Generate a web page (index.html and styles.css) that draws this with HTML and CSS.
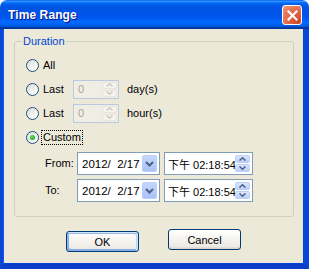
FILE: index.html
```html
<!DOCTYPE html>
<html lang="en">
<head>
    <meta charset="UTF-8">
    <title>Time Range</title>
    <link rel="stylesheet" href="styles.css">
</head>
<body>
<div class="janela">
    <div class="barra-titulo">
        <span class="titulo">Time Range</span>
        <button type="button" class="fechar">
            <svg width="11" height="11" viewBox="0 0 11 11"><path d="M1.5 1.5 L9.5 9.5 M9.5 1.5 L1.5 9.5" stroke="#fff" stroke-width="2.2" stroke-linecap="square"/></svg>
        </button>
    </div>
    <div class="cliente">
        <fieldset class="grupo">
            <legend>Duration</legend>

            <div class="linha">
                <span class="radio"></span>
                <span class="texto">All</span>
            </div>

            <div class="linha">
                <span class="radio"></span>
                <span class="texto rotulo">Last</span>
                <div class="caixa desativada">
                    <span class="valor">0</span>
                    <span class="spin">
                        <span class="seta"><svg width="7" height="4" viewBox="0 0 7 4"><path d="M0.5 3.5 L3.5 0.8 L6.5 3.5" fill="none" stroke="#C9C7BA" stroke-width="1.3"/></svg></span>
                        <span class="seta"><svg width="7" height="4" viewBox="0 0 7 4"><path d="M0.5 0.5 L3.5 3.2 L6.5 0.5" fill="none" stroke="#C9C7BA" stroke-width="1.3"/></svg></span>
                    </span>
                </div>
                <span class="texto unidade">day(s)</span>
            </div>

            <div class="linha">
                <span class="radio"></span>
                <span class="texto rotulo">Last</span>
                <div class="caixa desativada">
                    <span class="valor">0</span>
                    <span class="spin">
                        <span class="seta"><svg width="7" height="4" viewBox="0 0 7 4"><path d="M0.5 3.5 L3.5 0.8 L6.5 3.5" fill="none" stroke="#C9C7BA" stroke-width="1.3"/></svg></span>
                        <span class="seta"><svg width="7" height="4" viewBox="0 0 7 4"><path d="M0.5 0.5 L3.5 3.2 L6.5 0.5" fill="none" stroke="#C9C7BA" stroke-width="1.3"/></svg></span>
                    </span>
                </div>
                <span class="texto unidade">hour(s)</span>
            </div>

            <div class="linha">
                <span class="radio marcado"></span>
                <span class="texto foco">Custom</span>
            </div>

            <div class="linha-data primeira">
                <span class="texto rotulo-data">From:</span>
                <div class="combo">
                    <span class="valor">2012/&nbsp; 2/17</span>
                    <span class="abrir"><svg width="9" height="6" viewBox="0 0 9 6"><path d="M1 1 L4.5 4.5 L8 1" fill="none" stroke="#4D6185" stroke-width="2"/></svg></span>
                </div>
                <div class="hora">
                    <span class="valor">下午 02:18:54</span>
                    <span class="spin azul">
                        <span class="seta"><svg width="7" height="4" viewBox="0 0 7 4"><path d="M0.5 3.5 L3.5 0.8 L6.5 3.5" fill="none" stroke="#4D6185" stroke-width="1.5"/></svg></span>
                        <span class="seta"><svg width="7" height="4" viewBox="0 0 7 4"><path d="M0.5 0.5 L3.5 3.2 L6.5 0.5" fill="none" stroke="#4D6185" stroke-width="1.5"/></svg></span>
                    </span>
                </div>
            </div>

            <div class="linha-data">
                <span class="texto rotulo-data">To:</span>
                <div class="combo">
                    <span class="valor">2012/&nbsp; 2/17</span>
                    <span class="abrir"><svg width="9" height="6" viewBox="0 0 9 6"><path d="M1 1 L4.5 4.5 L8 1" fill="none" stroke="#4D6185" stroke-width="2"/></svg></span>
                </div>
                <div class="hora">
                    <span class="valor">下午 02:18:54</span>
                    <span class="spin azul">
                        <span class="seta"><svg width="7" height="4" viewBox="0 0 7 4"><path d="M0.5 3.5 L3.5 0.8 L6.5 3.5" fill="none" stroke="#4D6185" stroke-width="1.5"/></svg></span>
                        <span class="seta"><svg width="7" height="4" viewBox="0 0 7 4"><path d="M0.5 0.5 L3.5 3.2 L6.5 0.5" fill="none" stroke="#4D6185" stroke-width="1.5"/></svg></span>
                    </span>
                </div>
            </div>
        </fieldset>

        <div class="botoes">
            <button type="button" class="botao padrao">OK</button>
            <button type="button" class="botao cancelar">Cancel</button>
        </div>
    </div>
</div>
</body>
</html>
```

FILE: styles.css
```css
:root {
    --fundo: #ECE9D8;
    --borda-caixa: #7F9DB9;
    --azul-texto: #0046D5;
}

* {
    box-sizing: border-box;
    margin: 0;
    padding: 0;
}

body {
    width: 309px;
    height: 269px;
    overflow: hidden;
    font-family: 'Liberation Sans', Arial, 'Noto Sans CJK TC', sans-serif;
    font-size: 11px;
    color: #000;
    background: #fff;
}

.janela {
    width: 309px;
    height: 269px;
    display: flex;
    flex-direction: column;
}

.barra-titulo {
    height: 29px;
    flex-shrink: 0;
    display: flex;
    align-items: center;
    justify-content: space-between;
    padding: 0 7px 0 8px;
    border-radius: 7px 7px 0 0;
    background: linear-gradient(to bottom,
        #0058EE 0%, #3593FF 4%, #288EFF 6%, #127DFF 8%, #036FFC 10%,
        #0262EE 14%, #0057E5 20%, #0054E3 24%, #0055EB 56%, #005BF5 66%,
        #026AFE 76%, #0062EF 86%, #0052D6 92%, #0040AB 94%, #003092 100%);
}

.titulo {
    color: #fff;
    font-weight: bold;
    font-size: 12px;
    text-shadow: 1px 1px #0F1089;
    letter-spacing: 0.1px;
    margin-top: 1px;
}

.fechar {
    width: 20px;
    height: 20px;
    border: 1px solid #fff;
    border-radius: 3px;
    display: flex;
    align-items: center;
    justify-content: center;
    background: radial-gradient(circle at 85% 85%, #CC4625 0%, #DC5B3D 30%, #E57052 60%, #F19B80 100%);
    margin-top: 1px;
}

.cliente {
    flex: 1;
    background: var(--fundo);
    border-left: 3px solid #0A47D6;
    border-right: 5px solid #0A47D6;
    border-bottom: 5px solid #0A3EC8;
    box-shadow: inset 1px 0 #0B5AE8, inset -1px -1px #0044DC;
    display: flex;
    flex-direction: column;
}

.grupo {
    margin: 6px 10px 0 11px;
    border: 1px solid #D0D0BF;
    border-radius: 3px;
    padding: 5px 0 14px 11px;
}

.grupo legend {
    color: var(--azul-texto);
    line-height: 13px;
    padding: 0 1px;
    margin-left: -4px;
}

.linha {
    height: 24px;
    display: flex;
    align-items: center;
}

.texto {
    line-height: 13px;
}

.radio {
    width: 13px;
    height: 13px;
    border: 1px solid #1C5180;
    border-radius: 50%;
    background: linear-gradient(135deg, #DCDCD7 0%, #F2F2EE 60%, #FFFFFF 100%);
    margin-right: 4px;
    display: flex;
    align-items: center;
    justify-content: center;
}

.radio.marcado::after {
    content: "";
    width: 5px;
    height: 5px;
    border-radius: 50%;
    background: radial-gradient(circle at 40% 40%, #5FE05B 0%, #2BB12A 60%, #1E9A1E 100%);
}

.rotulo {
    width: 30px;
}

.foco {
    outline: 1px dotted #000;
    outline-offset: 0;
    padding: 0 1px;
    margin-left: -1px;
}

.caixa {
    width: 46px;
    height: 19px;
    border: 1px solid #B9C9E0;
    background: #EFEDE4;
    display: flex;
    align-items: center;
    justify-content: space-between;
    padding: 1px;
}

.valor {
    padding-left: 3px;
    white-space: nowrap;
    overflow: hidden;
}

.desativada .valor {
    color: #ACA899;
}

.spin {
    width: 15px;
    height: 100%;
    flex-shrink: 0;
    display: flex;
    flex-direction: column;
    gap: 1px;
}

.seta {
    flex: 1;
    display: flex;
    align-items: center;
    justify-content: center;
    border: 1px solid #E6E4DB;
    border-radius: 2px;
    background: #F4F3EE;
}

.spin.azul .seta {
    border-color: #BBCEF8;
    background: linear-gradient(to bottom, #DBE6FD, #BACFFA);
}

.unidade {
    margin-left: 8px;
}

.linha-data {
    height: 23px;
    display: flex;
    align-items: center;
    gap: 4px;
    margin-top: 4px;
}

.linha-data.primeira {
    margin-top: 3px;
}

.rotulo-data {
    width: 28px;
    margin-left: 19px;
}

.combo, .hora {
    height: 23px;
    border: 1px solid var(--borda-caixa);
    background: #fff;
    display: flex;
    align-items: center;
    justify-content: space-between;
    padding: 2px;
    font-size: 11px;
}

.combo {
    width: 83px;
}

.combo .valor {
    padding-left: 2px;
    font-size: 11.5px;
}

.hora {
    width: 89px;
}

.hora .valor {
    flex: 1;
    padding-left: 1px;
}

.abrir {
    width: 15px;
    height: 17px;
    flex-shrink: 0;
    border: 1px solid #BBCEF8;
    border-radius: 2px;
    background: linear-gradient(to bottom, #C6D7FC, #A9C2F6);
    display: flex;
    align-items: center;
    justify-content: center;
}

.botoes {
    display: flex;
    gap: 29px;
    padding-left: 63px;
    margin-top: 13px;
}

.botao {
    width: 73px;
    height: 21px;
    border: 1px solid #003C74;
    border-radius: 3px;
    font-family: 'Liberation Sans', Arial, sans-serif;
    font-size: 11px;
    color: #000;
    background: linear-gradient(to bottom, #FFFFFF 0%, #F4F3EE 50%, #ECEBE6 86%, #D6D0C5 100%);
}

.botao.padrao {
    box-shadow: inset -1px 1px #CEE7FF, inset 1px 2px #98B8EA, inset -2px 2px #BCD4F6, inset 1px -1px #89ADE4, inset 2px -2px #89ADE4;
    margin-top: 1px;
}

.botao.cancelar {
    margin-top: -1px;
}
```
